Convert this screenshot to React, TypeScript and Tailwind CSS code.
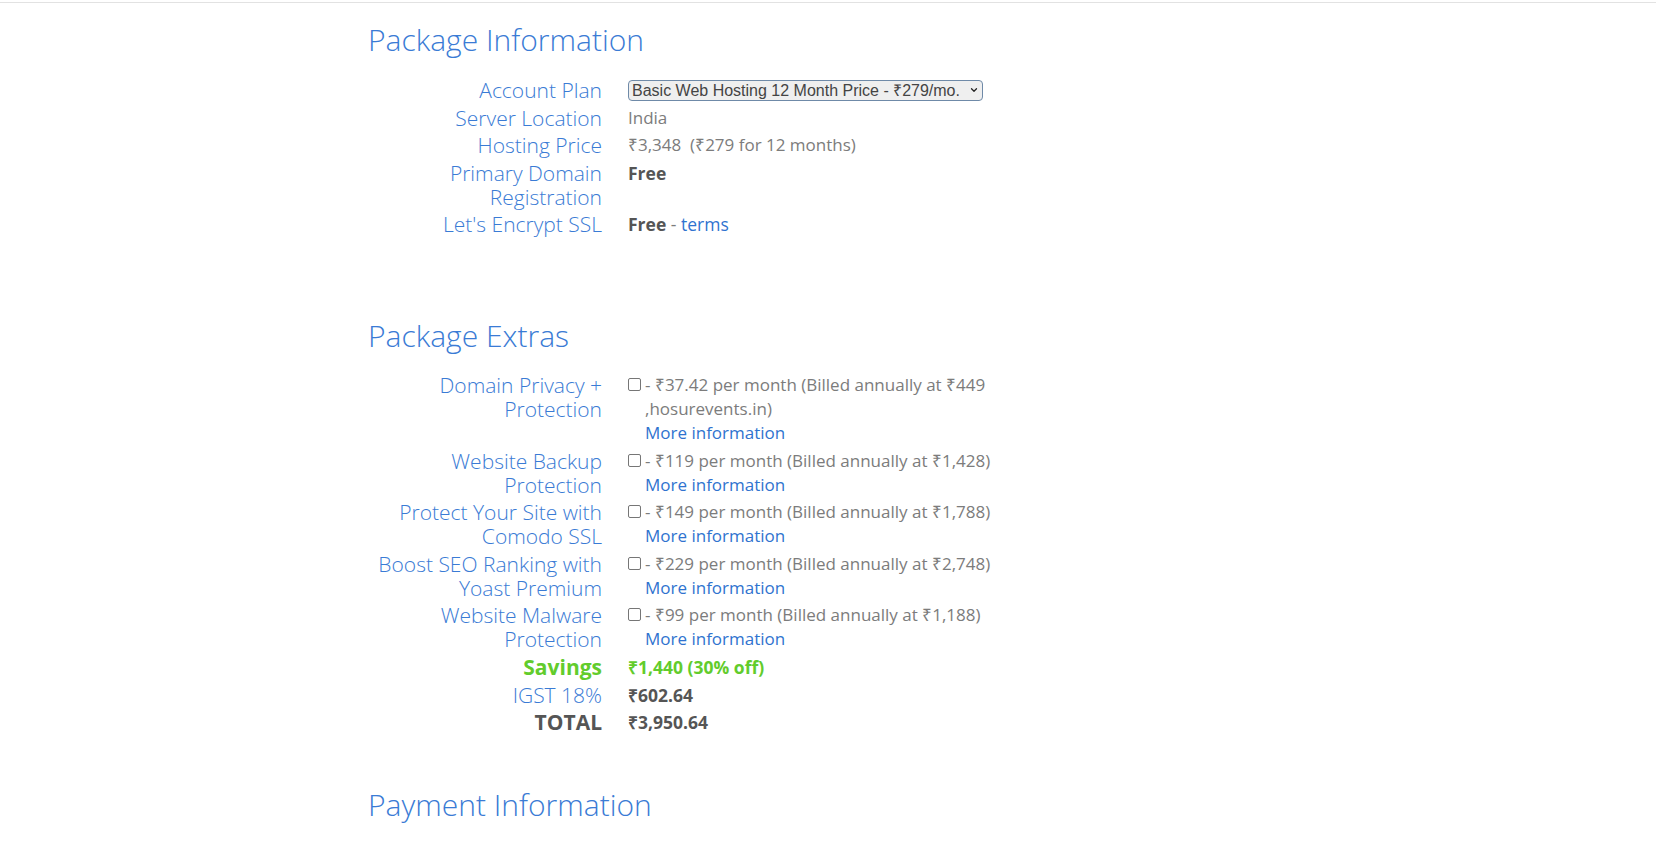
import { ChevronDown } from 'lucide-react';

interface Extra {
  label: string;
  text: string;
}

const extras: Extra[] = [
  { label: 'Domain Privacy + Protection', text: '- ₹37.42 per month (Billed annually at ₹449 ,hosurevents.in)' },
  { label: 'Website Backup Protection', text: '- ₹119 per month (Billed annually at ₹1,428)' },
  { label: 'Protect Your Site with Comodo SSL', text: '- ₹149 per month (Billed annually at ₹1,788)' },
  { label: 'Boost SEO Ranking with Yoast Premium', text: '- ₹229 per month (Billed annually at ₹2,748)' },
  { label: 'Website Malware Protection', text: '- ₹99 per month (Billed annually at ₹1,188)' },
];

function Row({
  label,
  labelClass,
  valueClass,
  children,
}: {
  label: string;
  labelClass?: string;
  valueClass?: string;
  children: React.ReactNode;
}) {
  return (
    <div className="flex gap-[26px]">
      <div className={`w-[234px] shrink-0 text-right text-[21px] leading-[24px] ${labelClass ?? 'font-light text-[#3a7bd5]'}`}>
        {label}
      </div>
      <div className={`w-[420px] leading-[24px] ${valueClass ?? 'text-[17px] text-[#7c7c7c]'}`}>{children}</div>
    </div>
  );
}

function Heading({ children, className }: { children: React.ReactNode; className?: string }) {
  return <h2 className={`text-[30px] leading-[36px] font-light text-[#3a7bd5] ${className ?? ''}`}>{children}</h2>;
}

const boldValue = 'text-[17.5px] font-bold text-[#555]';

export default function App() {
  return (
    <div className="min-h-screen bg-white font-['Open_Sans',sans-serif]">
      <div className="h-[3px] border-b border-[#e2e2e2]" />
      <div className="mx-auto w-[920px]">
        <Heading className="mt-[19px]">Package Information</Heading>

        <div className="mt-[20px] flex flex-col gap-[3.5px]">
          <Row label="Account Plan">
            <div className="relative flex h-[24px] items-center">
              <select className="h-[21px] w-[355px] appearance-none rounded-[4px] border border-[#6f8aa8] bg-[#efefef] pl-[3px] pr-[12px] font-['Liberation_Sans',Arial,sans-serif] text-[16px] leading-[19px] text-[#444]">
                <option>Basic Web Hosting 12 Month Price - ₹279/mo.</option>
              </select>
              <ChevronDown className="pointer-events-none absolute left-[341px] top-[7px] h-[10px] w-[10px] text-[#222]" strokeWidth={3} />
            </div>
          </Row>
          <Row label="Server Location">India</Row>
          <Row label="Hosting Price">₹3,348&nbsp; (₹279 for 12 months)</Row>
          <Row label="Primary Domain Registration" valueClass={boldValue}>
            Free
          </Row>
          <Row label="Let's Encrypt SSL" valueClass="text-[17.5px] text-[#7c7c7c]">
            <span className="font-bold text-[#555]">Free</span> - <a className="text-[#2f73cf]">terms</a>
          </Row>
        </div>

        <Heading className="mt-[82px]">Package Extras</Heading>

        <div className="mt-[19px] flex flex-col gap-[3.5px]">
          {extras.map((e) => (
            <Row key={e.label} label={e.label}>
              <div className="flex">
                <input
                  type="checkbox"
                  className="mt-[5px] mr-[4px] h-[13px] w-[13px] shrink-0 appearance-none rounded-[2px] border border-[#767676] bg-white"
                />
                <div className="w-[390px]">
                  <div>{e.text}</div>
                  <a className="text-[#2f73cf]">More information</a>
                </div>
              </div>
            </Row>
          ))}
        </div>

        <div className="mt-[4px] flex flex-col gap-[3.5px]">
          <Row label="Savings" labelClass="font-bold text-[#62cc2c]" valueClass="text-[17.5px] font-bold text-[#62cc2c]">
            ₹1,440 (30% off)
          </Row>
          <Row label="IGST 18%" valueClass={boldValue}>
            ₹602.64
          </Row>
          <Row label="TOTAL" labelClass="font-bold text-[#555]" valueClass={boldValue}>
            ₹3,950.64
          </Row>
        </div>

        <Heading className="mt-[53px]">Payment Information</Heading>
      </div>
    </div>
  );
}
